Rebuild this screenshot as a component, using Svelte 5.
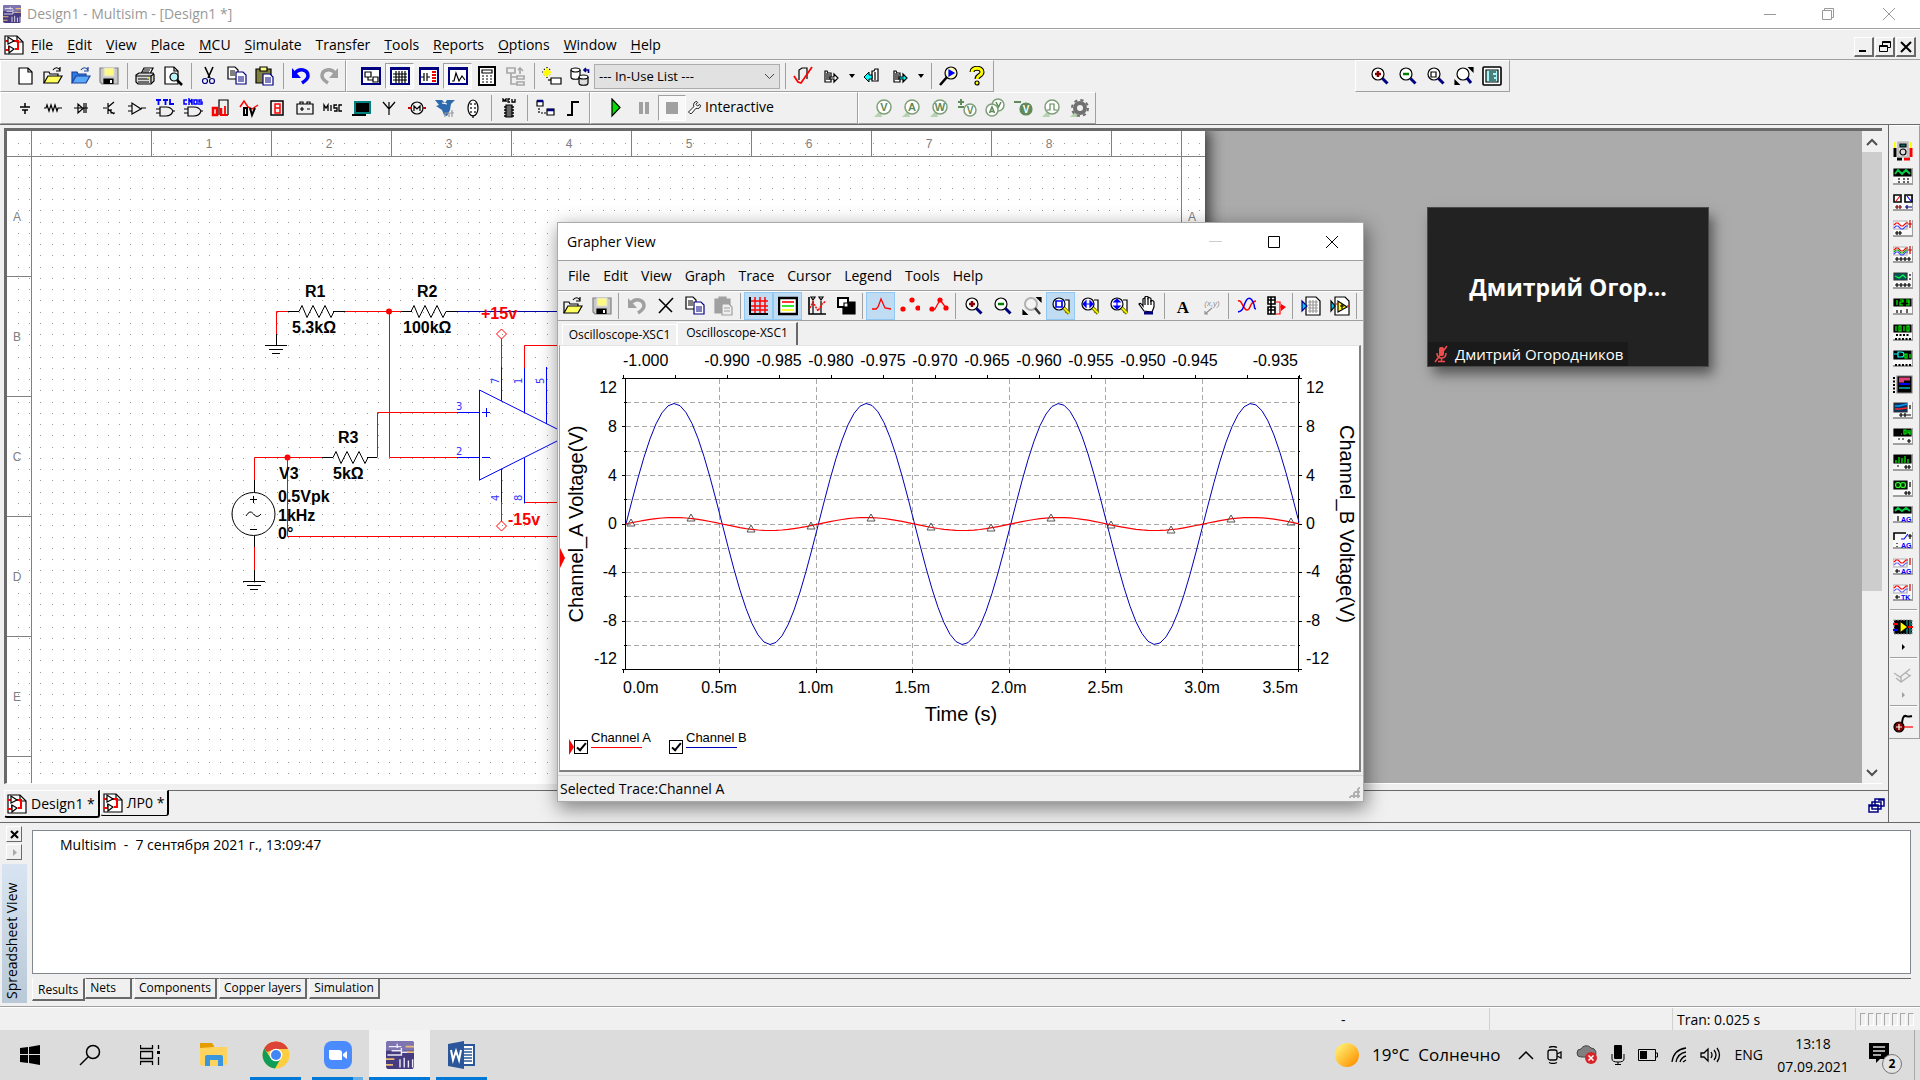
<script lang="ts">
  type Tool = { icon?: string; label?: string; on?: boolean; sep?: boolean; caret?: boolean; disabled?: boolean };

  const sep: Tool = { sep: true };

  // Pieces shared by several icons
  const lens = '<circle cx="8" cy="8" r="6" fill="#fff"/><path d="M12.5 12.5l5 5" stroke="#000080" stroke-width="3"/>';
  const yellowLens = '<path d="M14 4h4v12h-4" fill="#fff"/><circle cx="8" cy="8" r="6" fill="#fff"/><path d="M13 12l5 5.500" stroke="#808000" stroke-width="3.500"/><path d="M13 12l5 5" stroke="#ff0" stroke-width="1.500"/>';
  const folder = '<path d="M1 17V6h5l1 2h8v3"/><path d="M1 17l4-7h14l-4 7z" fill="#ffff60"/><path d="M10 4c2-3 5-3 7 0M17 1v4h-4"/>';
  const floppy = '<path d="M1 2h18v16H3l-2-2z" fill="#c8c8c8" stroke="#808080"/><path d="M5 2h10v8H5z" fill="#fffb80" stroke="#ddd"/><path d="M5 18v-5h9v5" fill="#000"/><path d="M11 14h2v3h-2z" fill="#fff" stroke="none"/>';
  const page = '<path d="M4 2h9l4 4v12H4z" fill="#fff"/><path d="M13 2v4h4"/>';
  const copy = '<path d="M1 1h7l3 3v9H1z" fill="#fff"/><path d="M3 5h5M3 7h5M3 9h5"/><path d="M9 6h7l3 3v9H9z" fill="#fff" stroke="#000080"/><path d="M11 11h6M11 13h6M11 15h6" stroke="#000080"/>';
  const frame = '<path d="M1 2h18v16H1z" fill="#fff" stroke="#000080" stroke-width="2"/><path d="M1 3h18" stroke="#000080" stroke-width="2"/>';
  const gate = '<path d="M5 9h6c4 0 6 2 7 4-1 3-3 5-7 5H5zM1 11h4M1 15h4M18 13h2"/>';
  const chip = '<path d="M4 5h2l1 2h3v9H4z" fill="#fff"/><path d="M6 7v7M8 8v6"/>';
  const meter = '<path d="M0 1h20v17H0z" fill="#f8f8f8" stroke="none"/><path d="M0 17h20V1" stroke="#a0a0a0" stroke-width="2"/>';
  const screen = '<path d="M0 2h14v8H0z" fill="#fff" stroke="#aaa"/>';
  const probe = (t: string) =>
    `<path d="M1 19h8l-2-6z" fill="#b5d3b0" stroke="none"/><circle cx="11" cy="9" r="7" fill="#fff" stroke="#7d9f78" stroke-width="1.500"/><text x="11" y="13" text-anchor="middle" font-size="11" font-weight="700" fill="#5f8a5a" stroke="none">${t}</text>`;
  const wave = (c: string, y: number) => `<path d="M1 ${y}l2-2 2 0 3 3 2 0 3-3 2 0" stroke="${c}"/>`;

  const icons: Record<string, string> = {
    doc: '<path d="M1 1h12l6 6v12H1z" fill="#fff"/><path d="M13 1v6h6"/><path d="M1 6h5M1 15h4v-4M9 6h5v8h-3" stroke="#f00" stroke-width="2"/><path d="M4 2v7l6-3zM5 11v7l5-4z" fill="#fff"/>',
    logo: '<rect x="0" y="0" width="20" height="20" rx="2" fill="#463a80" stroke="none"/><path d="M2 0h16q2 0 2 2v5H0V2q0-2 2-2z" fill="#7d74b0" stroke="none"/><path d="M2 4h9M4 7h7v-2M1 10h10v-2h5M8 2v3M10 13v6M13 12v7M16 14v5M19 13v6" stroke="#eceaf6" stroke-width="1"/><path d="M14 4h6M15 8h5M0 13h6M0 17h5" stroke="#e8bd74" stroke-width="1.200"/>',
    new: page,
    open: folder,
    openBlue: '<path d="M1 17V6h5l1 2h8v3" fill="#2a7de0" stroke="#1a3f9c"/><path d="M1 17l4-7h14l-4 7z" fill="#5aa8f8" stroke="#1a3f9c"/><path d="M10 4c2-3 5-3 7 0M17 1v4h-4" stroke="#1a3f9c"/>',
    save: floppy,
    print: '<path d="M6 8l3-6h9l-3 6" fill="#fff"/><path d="M9 4h6M8 6h6"/><path d="M1 9l3-2h14l1 2v6l-3 3H3l-2-2z" fill="#d8d8d8"/><path d="M1 10h15v7M3 13h11M16 10l3-2M3 16h11" /><path d="M12 12h2" stroke="#ff0"/>',
    preview: '<path d="M2 1h9l4 4v13H2z" fill="#fff"/><path d="M11 1v4h4"/><circle cx="11" cy="11" r="4" fill="#b8f4f8"/><path d="M14 14l5 5" stroke-width="2.500"/>',
    cut: '<path d="M6 1l5 11M14 1L9 12" stroke-width="1.600"/><circle cx="6" cy="15" r="2.500" stroke="#000080"/><circle cx="13" cy="15" r="2.500" stroke="#000080"/>',
    copy,
    paste: '<path d="M1 3h15v14H1z" fill="#808040"/><path d="M5 1h7v4H5z" fill="#ff8"/><path d="M8 8h7l3 3v8H8z" fill="#fff" stroke="#000080"/><path d="M10 12h6M10 14h6M10 16h6" stroke="#000080"/>',
    pasteOff: '<path d="M1 3h15v14H1z" fill="#a0a0a0" stroke="#a0a0a0"/><path d="M5 1h7v4H5z" fill="#a0a0a0" stroke="#a0a0a0"/><path d="M8 8h7l3 3v8H8z" fill="#eee" stroke="#a0a0a0"/><path d="M10 12h6M10 15h6" stroke="#a0a0a0"/>',
    undo: '<path d="M4 7c4-5 13-4 13 3 0 3-3 5-6 7" stroke="#00f" stroke-width="3.500"/><path d="M1 2v10h9z" fill="#00f" stroke="none"/>',
    undoOff: '<path d="M4 7c4-5 13-4 13 3 0 3-3 5-6 7" stroke="#a0a0a0" stroke-width="3.500"/><path d="M1 2v10h9z" fill="#a0a0a0" stroke="none"/>',
    redoOff: '<path d="M16 7c-4-5-13-4-13 3 0 3 3 5 6 7" stroke="#a0a0a0" stroke-width="3.500"/><path d="M19 2v10h-9z" fill="#a0a0a0" stroke="none"/>',
    toolbox: frame + '<path d="M4 6h6v5H4zM12 11h5v5h-5zM7 11v3h5" />',
    sheet: frame + '<path d="M3 8h14M3 11h14M3 14h14M6 5v12M9 5v12M12 5v12M15 5v12"/>',
    spice: frame + '<path d="M2 11h3M5 7v8M8 7v8M8 11h3"/><path d="M13 6h4M13 9h4M13 12h4M13 15h4" stroke="#e00" stroke-width="2"/>',
    grapher: frame + '<path d="M4 15h2l2-8 3 8 3-5 3 4"/>',
    calc: '<path d="M2 1h16v18H2z" fill="#fff" stroke-width="2"/><path d="M5 4h10v3H5zM5 10h2M9 10h2M13 10h2M5 13h2M9 13h2M13 13h2M5 16h2M9 16h2M13 16h2"/>',
    tree: '<path d="M1 2h8v5H1zM11 10h7v3h-7zM11 16h7v3h-7zM5 7v11h6M5 11h6M14 2v6M12 4l2-2 3 3" stroke="#a8a8a8" stroke-width="1.700"/>',
    wizard: '<path d="M5 1v11M0 6h10M2 3l6 6M8 3l-6 6" stroke="#000" stroke-width="1.200" stroke-dasharray="1 1.500"/><path d="M5 2v9M1 6h8M3 4l5 5M7 4l-5 5" stroke="#ff0" stroke-width="1.800"/><path d="M9 12h10v6H9z" fill="#fff"/><path d="M6 14h3"/>',
    database: '<path d="M1 4v7c0 3 9 3 9 0V4" fill="#fff"/><ellipse cx="5.500" cy="4" rx="4.500" ry="2" fill="#fff"/><path d="M9 11v6c0 3 9 3 9 0v-6" fill="#ddd"/><ellipse cx="13.500" cy="11" rx="4.500" ry="2" fill="#fff"/><path d="M18.500 7V4H14M16 2l-2 2 2 2" stroke="#000080" stroke-width="1.600"/>',
    erc: '<path d="M6 14V4l3-2h5v11"/><path d="M1 10l4 6 3 1L19 1" stroke="#f00" stroke-width="1.800"/>',
    toLayout: chip + '<path d="M9 11h4V8l4 4-4 4v-3H9z" fill="#fff"/>',
    back: '<path d="M10 5h2l1-2h3v12h-6zM13 6v8" fill="#fff"/><path d="M10 9H7V6l-5 5 5 5v-3h3z" fill="#0ff" stroke-width="1"/>',
    forward: chip + '<path d="M9 11h4V8l4 4-4 4v-3H9z" fill="#0ff"/>',
    find: '<circle cx="12" cy="7" r="6" fill="#ffffc0"/><path d="M10 4v6l5-3z" fill="#00f" stroke="#00f"/><path d="M8 11l-7 8" stroke-width="2.500"/>',
    help: '<path d="M5 6c0-5 10-5 10 0 0 4-5 3-5 7" stroke="#000" stroke-width="5"/><path d="M5 6c0-5 10-5 10 0 0 4-5 3-5 7" stroke="#ff0" stroke-width="3"/><circle cx="10" cy="17" r="2" fill="#ff0"/>',
    source: '<path d="M10 5v4M5 9h10M7 12h6M10 12v4" stroke-width="1.500"/>',
    basic: '<path d="M1 10h2l1-3 2 6 2-6 2 6 2-6 2 6 1-3h4"/>',
    diode: '<path d="M3 10h14M7 6v9l5-4.500zM13 5v10M15 5v10"/>',
    transistor: '<path d="M4 10h4M9 5v11M9 9l6-5M9 11l6 5M12 11v4h4"/>',
    analog: '<path d="M5 5v11l9-5zM1 8h4M1 13h4M14 10h5"/>',
    ttl: gate + '<path d="M1 2h5M3.500 2v5M8 2h5M10.500 2v5M15 1v5h4" stroke="#00f" stroke-width="1.800"/>',
    cmos: gate + '<path d="M4 2H1v4h3M6 7V1l2 3 1-3v6M11 2h3v4h-3zM19 2h-3v2h3v2h-4" stroke="#00f" stroke-width="1.500"/>',
    miscDigital: '<path d="M8 17V2h9v15" /><path d="M2 10h4v7H2zM10 17V10" stroke="#f00" stroke-width="2.500"/><path d="M9 17h8M14 8v10" stroke="#f00" stroke-width="1.800"/>',
    mixed: '<path d="M1 9l4-6 4 6 4 2 3-2 3-2" stroke="#f00" stroke-width="1.500"/><path d="M5 10h3v7H5zM11 10l2 7 3-7" stroke-width="2"/>',
    indicator: '<path d="M4 3h12v14H4z" stroke-width="1.500"/><path d="M8 6h5v9H8zM8 10h5" stroke="#f00" stroke-width="1.500"/>',
    power: '<path d="M2 6h16v10H2zM5 6V4h3v2M12 6V4h3v2M5 11h4M7 9v4M12 11h3"/>',
    misc: '<path d="M1 13V7l2 3 2-3v6M8 7v6M14 7h-3v3h3v3h-3M19 7h-3v6h3" stroke-width="1.300"/>',
    periph: '<path d="M4 4h15v11H4z" fill="#000" stroke="#008080" stroke-width="2"/><path d="M1 17h14" stroke-width="2"/>',
    rf: '<path d="M10 4v13M4 4l6 7 6-7"/>',
    motor: '<circle cx="10" cy="10" r="6"/><path d="M7 13V8l3 3 3-3v5" /><path d="M1 10h3M16 10h3" stroke="#c00" stroke-width="2"/>',
    ni: '<path d="M0 2h7l3 3 2-3h8l-4 4-1 6-3 6-3-1-2-5-6-4 3-1z" fill="#2c69ad" stroke="none"/><path d="M7 5l5 1" stroke="#fff"/><path d="M10 19v-4h4v4M17 12v7M15 15h4" stroke="#999"/>',
    connector: '<ellipse cx="10" cy="10" rx="5" ry="8" fill="#fff"/><path d="M8 5v2M12 5v2M8 9v2M12 9v2M8 13v2M12 13v2M10 17v3"/>',
    mcu: '<path d="M4 4V1l1.500 2L7 1v3M11 1H9v3h2M13 1v3h3V1" stroke-width="1.300"/><path d="M7 7h6v12H7z" fill="#666"/><path d="M5 9h2M5 12h2M5 15h2M5 18h2M13 9h2M13 12h2M13 15h2M13 18h2" stroke-width="1.500"/>',
    hierarchy: '<path d="M2 3h6v5H2zM12 11h7v6h-7z" fill="#fff"/><path d="M2 3h6M12 12h7" stroke="#000080" stroke-width="2.500"/><path d="M4 10v5M6 15h5" stroke-dasharray="2 1"/>',
    bus: '<path d="M4 17h5V4h7" stroke-width="2"/>',
    run: '<path d="M6 1v17l8-8.500z" fill="#00e000"/>',
    pause: '<path d="M7 4v12M13 4v12" stroke="#a0a0a0" stroke-width="4"/>',
    stop: '<path d="M4 4h12v12H4z" fill="#a0a0a0" stroke="none"/>',
    wrench: '<path d="M4 18l-2-2 7-7c-1-4 1-7 4-7l1 1-2 3 2 2 3-2 1 1c0 4-3 5-6 4l-6 7z" fill="#fff"/>',
    probeV: probe('V'),
    probeA: probe('A'),
    probeW: probe('W'),
    probeDiff: '<path d="M1 4h6M4 1v6M1 9h6" stroke="#5f8a5a" stroke-width="2"/><circle cx="13" cy="12" r="6" fill="#fff" stroke="#7d9f78" stroke-width="1.500"/><text x="13" y="16" text-anchor="middle" font-size="10" font-weight="700" fill="#5f8a5a" stroke="none">V</text>',
    probeVI: '<circle cx="13" cy="7" r="6" fill="#fff" stroke="#7d9f78" stroke-width="1.500"/><path d="M11 4l2.500 5L16 4" stroke="#5f8a5a" stroke-width="1.500"/><circle cx="7" cy="12" r="6" fill="#fff" stroke="#7d9f78" stroke-width="1.500"/><path d="M4.500 15L7 9l2.500 6M5 13.500h4" stroke="#5f8a5a" stroke-width="1.500"/>',
    probeRef: '<path d="M1 4h7" stroke="#5f8a5a" stroke-width="2"/><circle cx="13" cy="11" r="6" fill="#5f8a5a" stroke="#5f8a5a"/><text x="13" y="15" text-anchor="middle" font-size="10" font-weight="700" fill="#fff" stroke="none">V</text>',
    probeDigital: '<path d="M1 19h8l-2-6z" fill="#b5d3b0" stroke="none"/><circle cx="11" cy="9" r="7" fill="#fff" stroke="#7d9f78" stroke-width="1.500"/><path d="M6 12h3V6h4v6h3" stroke="#5f8a5a"/>',
    gear: '<path d="M1 19h8l-2-6z" fill="#b5d3b0" stroke="none"/><circle cx="11" cy="10" r="5" stroke="#707070" stroke-width="4"/><circle cx="11" cy="10" r="8" stroke="#707070" stroke-width="2" stroke-dasharray="3.200 3.100"/>',
    zoomIn: lens + '<path d="M8 5v6M5 8h6" stroke="#800000" stroke-width="2.500"/>',
    zoomOut: lens + '<path d="M5 8h6" stroke="#008000" stroke-width="2.500"/>',
    zoomArea: lens + '<path d="M5 6h5v5H5z"/>',
    zoomFit: '<path d="M15 1.500h4v4zM5 18.500H1v-4z" fill="#000"/><circle cx="9" cy="8" r="6" fill="#fff"/><path d="M13 12l4 5" stroke="#000080" stroke-width="3"/>',
    zoomGray: '<path d="M15 1.500h4v4zM5 18.500H1v-4z" fill="#000"/><circle cx="9" cy="8" r="6" fill="#f4f4f4" stroke="#b0b0b0" stroke-width="2"/><path d="M13 12l5 6" stroke="#333" stroke-width="2.500"/>',
    fullscreen: '<rect x="1" y="1" width="18" height="18" rx="1" stroke-width="1.600" fill="#fff"/><path d="M4 4h12v12H4z" fill="#a0f8f8"/><path d="M7 6h7M7 8h4M7 10h7M7 12h5M7 14h7"/>',
    lensBox: yellowLens + '<path d="M5 5h6v6H5z" stroke="#00f" stroke-width="1.700"/>',
    lensH: yellowLens + '<path d="M4 8h8M6 5L3 8l3 3zM10 5l3 3-3 3z" stroke="#00f" fill="#00f"/>',
    lensV: yellowLens + '<path d="M8 4v8M5 6l3-3 3 3zM5 10l3 3 3-3z" stroke="#00f" fill="#00f"/>',
    hand: '<path d="M6 15L1 8c1-1 2-1 4 2V3c1-1 2-1 2 0V1c1-1 3-1 3 0v1c1-1 3 0 3 1v2c1-1 3 0 3 1v5l-2 5z" fill="#fff"/><path d="M7 3v6M10 2v7M13 4v5"/><path d="M6 17h9" stroke="#000080" stroke-width="3"/>',
    del: '<path d="M3 3l13 13M17 2L3 17" stroke-width="1.600"/>',
    grid: '<path d="M6 1v17M11 1v17M16 1v17M1 5h18M1 10h18M1 14h18" stroke="#f00" stroke-width="1.500"/><path d="M1 1v17h18" stroke-width="2"/>',
    legend: '<path d="M1 2h18v16H1z" fill="#fff" stroke-width="2.500"/><path d="M4 6h12" stroke="#f00" stroke-width="1.600"/><path d="M4 10h12" stroke="#0d0" stroke-width="1.600"/><path d="M4 14h12" stroke="#ff0" stroke-width="1.600"/>',
    cursors: '<path d="M2 1v17h17" stroke-width="1.600"/><path d="M6 3v15M14 3v15M4 1h4l-2 3zM12 1h4l-2 3z"/><path d="M3 12l3-6 5 9 4-7 4-3" stroke="#f00" stroke-width="1.500" stroke-dasharray="2 1"/>',
    invert: '<path d="M7 6h12v12H7z" fill="#000"/><path d="M2 2h10v9H2z" fill="#fff" stroke-width="2"/><path d="M8 7h4v4H8z" fill="#fff"/>',
    line: '<path d="M1 13h4l2-2 3-8 4 9 6 1" stroke="#f00" stroke-width="1.300"/>',
    dots: '<g fill="#f00" stroke="none"><circle cx="3" cy="13" r="2.600"/><circle cx="12" cy="4" r="2.600"/><circle cx="18" cy="12" r="2.600"/></g>',
    lineDots: '<path d="M2 14l4-1 5-9 7 9" stroke="#f00" stroke-width="1.300"/><g fill="#f00" stroke="none"><circle cx="3" cy="13" r="2.600"/><circle cx="11" cy="4" r="2.600"/><circle cx="17" cy="12" r="2.600"/></g>',
    text: '<text x="10" y="17" text-anchor="middle" font-size="17" font-weight="700" fill="#000" stroke="none" style="font-family:Liberation Serif,serif">A</text>',
    fx: '<text x="10" y="10" text-anchor="middle" font-size="8" font-style="italic" fill="#909090" stroke="none">(x,y)</text><path d="M10 12l-7 6M3 15v3h3" stroke="#909090"/>',
    overlay: '<path d="M1 5c4-2 5 9 9 9s2-8 9-9" stroke="#f00" stroke-width="1.500"/><path d="M1 16c5-1 5-4 7-9s5-7 8-1 0 6 3 7" stroke="#00f" stroke-width="1.500"/>',
    trace: '<path d="M2 1h7v7H2zM2 11h7v7H2zM2 4h7M2 14h7M5 1v17" fill="#fff" stroke-width="1.600"/><path d="M9 6h5v12H9M14 11h3" stroke="#f00"/><path d="M15 8v7l5-4z" fill="#f00" stroke="none"/>',
    excel: '<path d="M5 1h10l4 4v14H5z" fill="#fff"/><path d="M7 6h10M7 9h10M7 12h10M7 15h10M9 4v13M12 4v13M15 4v13" stroke="#999"/><path d="M1 5v10l5-5z" fill="#00c8f0" stroke="#008"/>',
    labview: '<path d="M5 1h10l4 4v14H5z" fill="#fff"/><path d="M8 5v11l9-5z" fill="#ff0"/><path d="M10 10h4M12 8v5"/><path d="M1 5v10l4-5z" fill="#00c8f0"/><path d="M5 8h3M17 10h3" stroke="#f00"/>',
    multimeter: '<path d="M2 1v15M18 1v15" stroke="#ff0" stroke-width="2"/><path d="M2 7v9M4 18h5" stroke-width="3"/><path d="M18 7v9M11 18h6" stroke="#f00" stroke-width="3"/><path d="M5 1h10v15H5z" fill="#ddd" stroke="#aaa"/><path d="M7 3h6v3H7z" fill="#066"/><circle cx="10" cy="11" r="3"/>',
    funcgen: meter + '<path d="M1 2h17v7H1z" fill="#000"/><path d="M2 7l3-4 4 4 4-4 4 4" stroke="#0c4" stroke-width="2"/><path d="M6 11v5M11 11v5M15 11v5" stroke-dasharray="2 1"/>',
    wattmeter: meter + '<path d="M1 2h7v7H1zM12 2h7v7h-7z" fill="#fff" stroke-width="1.600"/><path d="M3 8l4-5" stroke="#f00"/><path d="M18 8l-4-5" stroke="#00f"/><path d="M2 14h7M4 12v4M7 12v4" stroke="#700"/><path d="M12 14h7M14 12v4" stroke="#007"/>',
    scope: meter + screen + wave('#f00', 6) + wave('#44f', 9) + '<path d="M17 1v8M15 5h4" stroke="#c00"/><path d="M2 14h7M4 12v4M7 12v4"/>',
    scope4: meter + screen + wave('#f00', 5) + wave('#0a0', 7) + wave('#44f', 9) + '<path d="M17 1v8M15 5h4" stroke="#c00"/><path d="M2 14h16M4 12v4M8 12v4M12 12v4M16 12v4"/>',
    bode: meter + '<path d="M1 2h13v7H1z" fill="#055" stroke="#333"/><path d="M2 5l4 2 4-3 3 3" stroke="#0f4"/><path d="M2 14h16M4 12v4M8 12v4M12 12v4M16 12v4M17 3v2M17 7v2"/>',
    counter: meter + '<path d="M1 2h17v7H1z" fill="#000"/><path d="M4 3v5M7 3h3v2H7v3h3M13 3h3v5h-3M13 5h3" stroke="#0f0"/><path d="M4 13v3M8 13v3M14 12v4"/>',
    wordgen: meter + '<path d="M1 2h17v7H1z" fill="#000"/><path d="M3 3v5M6 3h2v5H6zM11 3v5M14 3h2v5h-2z" stroke="#0f0"/><path d="M3 12h13M2 16h16" stroke-width="2" stroke-dasharray="2 1.500"/>',
    logicconv: meter + '<path d="M1 2h17v8H1z" fill="#000"/><path d="M1 5h4V3h3c4 0 4 5 0 5H5V5" stroke="#0ff"/><path d="M12 5h2v4h-2zM17 5v4" stroke="#0f0"/><path d="M2 16h16" stroke-width="2" stroke-dasharray="2 1.500"/>',
    logican: '<path d="M4 1h15v17H4z" fill="#000" stroke="#888"/><path d="M6 4h11M6 6h5" stroke="#e0407a" stroke-width="3"/><path d="M6 9h11" stroke="#00f" stroke-width="2"/><path d="M6 13h11" stroke="#088" stroke-width="2"/><path d="M1 2v16" stroke-width="2" stroke-dasharray="2 1.500"/>',
    iv: meter + '<path d="M1 2h13v9H1z" fill="#036" stroke="#333"/><path d="M2 5h4l8-2" stroke="#09f" stroke-width="1.500"/><path d="M2 8h5l7-1" stroke="#f22" stroke-width="1.500"/><path d="M6 14h12M8 12v4M12 12v4M17 4v4"/>',
    distortion: meter + '<path d="M1 2h17v7H1z" fill="#000"/><path d="M8 7h1M11 3h2v4h-2zM15 3v3h2M17 3v5" stroke="#0f0"/><path d="M5 12h2M9 12h2M16 12v4M14 14h4"/>',
    spectrum: meter + '<path d="M1 2h17v8H1z" fill="#000"/><path d="M3 7v3M6 4v6M9 5v5M12 3v7M15 6v4" stroke="#0f0"/><path d="M4 13h2M11 14h7M13 12v4M16 12v4"/>',
    network: meter + '<path d="M1 2h13v8H1z" fill="#030"/><circle cx="5" cy="6" r="2.500" stroke="#3f3"/><circle cx="10" cy="6" r="2.500" stroke="#3f3"/><path d="M17 3v5M11 14h7M13 12v4M16 12v4"/>',
    agFunc: meter + '<path d="M1 2h17v6H1z" fill="#000"/><path d="M2 6l3-3 4 3 4-3 4 3" stroke="#0c4" stroke-width="2"/><path d="M5 11v5"/><text x="8" y="17" font-size="7" font-weight="700" fill="#00f" stroke="none">AG</text>',
    agMeter: meter + '<path d="M1 9V2h12" stroke-width="1.600"/><path d="M8 8h3l4-5" stroke="#00f"/><path d="M17 3v5M15 5h4"/><path d="M4 12v1M4 15v1"/><text x="8" y="17" font-size="7" font-weight="700" fill="#00f" stroke="none">AG</text>',
    agScope: meter + screen + wave('#f00', 5) + wave('#66f', 8) + '<path d="M17 1v7" stroke="#c00"/><path d="M2 14h5M4 12v4"/><text x="8" y="17" font-size="7" font-weight="700" fill="#00f" stroke="none">AG</text>',
    tkScope: meter + screen + wave('#f00', 5) + wave('#66f', 8) + '<path d="M17 1v7" stroke="#c00"/><path d="M2 14h5M4 12v4"/><text x="8" y="17" font-size="7" font-weight="700" fill="#00f" stroke="none">TK</text>',
    lvInstr: '<path d="M1 3h18v14H1z" fill="#000" stroke="#999" stroke-dasharray="2 1"/><path d="M14 4v12M17 4v12" stroke="#066" stroke-width="2"/><path d="M7 4v12l8-6z" fill="#ff0"/><path d="M15 10h5M0 7h5" stroke="#f00" stroke-width="2"/><path d="M0 13h5" stroke="#00f" stroke-width="2"/>',
    elvis: '<path d="M1 8l6 4 10-8M3 13l5 4 10-7M8 12v5M13 8l4 3" stroke="#b4b4b4" stroke-width="1.500"/>',
    clamp: '<path d="M9 12c0-5 1-10 4-9s2 1 6 0" stroke-width="2"/><circle cx="6" cy="14" r="5" fill="#800000"/><path d="M6 11v6M3 14h6" stroke="#fff"/><path d="M11 14h9" stroke="#f00"/>'
  };

  const menus = [['', 'F', 'ile'], ['', 'E', 'dit'], ['', 'V', 'iew'], ['', 'P', 'lace'], ['', 'M', 'CU'], ['', 'S', 'imulate'], ['Tra', 'n', 'sfer'], ['', 'T', 'ools'], ['', 'R', 'eports'], ['', 'O', 'ptions'], ['', 'W', 'indow'], ['', 'H', 'elp']];

  const standardBar: Tool[] = [
    { icon: 'new', label: 'New' }, { icon: 'open', label: 'Open' }, { icon: 'openBlue', label: 'Open samples' }, { icon: 'save', label: 'Save' }, sep,
    { icon: 'print', label: 'Print' }, { icon: 'preview', label: 'Print preview' }, sep,
    { icon: 'cut', label: 'Cut' }, { icon: 'copy', label: 'Copy' }, { icon: 'paste', label: 'Paste' }, sep,
    { icon: 'undo', label: 'Undo' }, { icon: 'redoOff', label: 'Redo', disabled: true }
  ];
  const viewBar: Tool[] = [
    { icon: 'toolbox', label: 'Design toolbox' }, { icon: 'sheet', label: 'Spreadsheet view', on: true }, { icon: 'spice', label: 'SPICE netlist viewer' },
    { icon: 'grapher', label: 'Grapher', on: true }, { icon: 'calc', label: 'Postprocessor' }, { icon: 'tree', label: 'Parent sheet', disabled: true }
  ];
  const partBar: Tool[] = [{ icon: 'wizard', label: 'Component wizard' }, { icon: 'database', label: 'Database manager' }];
  const layoutBar: Tool[] = [
    { icon: 'erc', label: 'Electrical rules check' }, { icon: 'toLayout', label: 'Transfer to layout', caret: true },
    { icon: 'back', label: 'Back annotate' }, { icon: 'forward', label: 'Forward annotate', caret: true }, sep,
    { icon: 'find', label: 'Find examples' }, { icon: 'help', label: 'Help' }
  ];
  const zoomBar: Tool[] = [
    { icon: 'zoomIn', label: 'Zoom in' }, { icon: 'zoomOut', label: 'Zoom out' }, { icon: 'zoomArea', label: 'Zoom area' },
    { icon: 'zoomFit', label: 'Zoom sheet' }, { icon: 'fullscreen', label: 'Full screen' }
  ];
  const componentBar: Tool[] = [
    ...['source', 'basic', 'diode', 'transistor', 'analog', 'ttl', 'cmos', 'miscDigital', 'mixed', 'indicator', 'power', 'misc', 'periph', 'rf', 'motor', 'ni', 'connector'].map((n) => ({ icon: n, label: `Place ${n}` })),
    sep, { icon: 'mcu', label: 'Place MCU' }, sep,
    { icon: 'hierarchy', label: 'Hierarchical block' }, { icon: 'bus', label: 'Bus' }
  ];
  const probeBar: Tool[] = ['probeV', 'probeA', 'probeW', 'probeDiff', 'probeVI', 'probeRef', 'probeDigital', 'gear'].map((n) => ({ icon: n, label: n }));
  const grapherBar: Tool[] = [
    { icon: 'open', label: 'Open' }, { icon: 'save', label: 'Save' }, sep,
    { icon: 'undoOff', label: 'Undo', disabled: true }, { icon: 'del', label: 'Delete' }, { icon: 'copy', label: 'Copy' }, { icon: 'pasteOff', label: 'Paste', disabled: true }, sep,
    { icon: 'grid', label: 'Show grid', on: true }, { icon: 'legend', label: 'Show legend', on: true }, { icon: 'cursors', label: 'Show cursors' }, { icon: 'invert', label: 'Black and white' }, sep,
    { icon: 'line', label: 'Lines', on: true }, { icon: 'dots', label: 'Points' }, { icon: 'lineDots', label: 'Lines and points' }, sep,
    { icon: 'zoomIn', label: 'Zoom in' }, { icon: 'zoomOut', label: 'Zoom out' }, { icon: 'zoomGray', label: 'Zoom fit' }, { icon: 'lensBox', label: 'Zoom area', on: true },
    { icon: 'lensH', label: 'Zoom horizontal' }, { icon: 'lensV', label: 'Zoom vertical' }, { icon: 'hand', label: 'Pan' }, sep,
    { icon: 'text', label: 'Add text' }, { icon: 'fx', label: 'Add data label', disabled: true }, sep,
    { icon: 'overlay', label: 'Overlay traces' }, { icon: 'trace', label: 'Add traces' }, sep,
    { icon: 'excel', label: 'Export to Excel' }, { icon: 'labview', label: 'Export to LabVIEW' }, sep
  ];
  const instruments = ['multimeter', 'funcgen', 'wattmeter', 'scope', 'scope4', 'bode', 'counter', 'wordgen', 'logicconv', 'logican', 'iv', 'distortion', 'spectrum', 'network', 'agFunc', 'agMeter', 'agScope', 'tkScope'];
  const resultTabs = ['Results', 'Nets', 'Components', 'Copper layers', 'Simulation'];

  // Snap grid of the schematic sheet
  let gridDots = '';
  for (let i = 0; i < 106; i++) {
    for (let j = 0; j < 70; j++) {
      gridDots += `M${Math.round(17.75 + i * 11.25)} ${Math.round(142.75 + j * 11.25)}h1v1h-1z`;
    }
  }
  const columns = [0, 1, 2, 3, 4, 5, 6, 7, 8];
  const rows = ['A', 'B', 'C', 'D', 'E'];
  const zig = (x: number, y: number) => `M${x} ${y}l3-6 5 12 6-12 6 12 6-12 6 12 3-6`;

  // Oscilloscope plot
  const plot = { left: 625, right: 1299, zero: 524, period: 192.4 };
  const sine = (x: number, amp: number) => plot.zero - amp * Math.sin((2 * Math.PI * (x - plot.left - 1)) / plot.period);
  function curve(amp: number) {
    const pts: string[] = [];
    for (let x = plot.left + 1; x <= plot.right; x += 6) pts.push(`${x},${sine(x, amp).toFixed(1)}`);
    pts.push(`${plot.right},${sine(plot.right, amp).toFixed(1)}`);
    return pts.join(' ');
  }
  const volts = [12, 8, 4, 0, -4, -8, -12];
  const voltY = (v: number) => (v === 12 ? 393 : v === -12 ? 664 : 529 - v * 12.1);
  const hLines = Array.from({ length: 11 }, (_, i) => Math.round(402 + i * 24.3) + 0.5);
  const vLines = Array.from({ length: 6 }, (_, i) => Math.round(719 + i * 96.6) + 0.5);
  const topTicks = Array.from({ length: 14 }, (_, i) => 623.5 + i * 52);
  const topLabels = ['-0.990', '-0.985', '-0.980', '-0.975', '-0.970', '-0.965', '-0.960', '-0.955', '-0.950', '-0.945'];
  const timeLabels = ['0.5m', '1.0m', '1.5m', '2.0m', '2.5m', '3.0m'];
  const markers = Array.from({ length: 12 }, (_, i) => 631 + i * 60);

  let channelA = $state(true);
  let channelB = $state(true);
</script>

{#snippet icon(name: string, size = 20)}
  <svg class="icon" width={size} height={size} viewBox="0 0 20 20" fill="none" stroke="#000" stroke-width="1.2" aria-hidden="true">{@html icons[name]}</svg>
{/snippet}

{#snippet tools(list: Tool[])}
  {#each list as t}
    {#if t.sep}
      <span class="sep"></span>
    {:else}
      <button class="tool" class:on={t.on} disabled={t.disabled} aria-label={t.label}>{@render icon(t.icon ?? '')}</button>
      {#if t.caret}<button class="caret" aria-label="{t.label} options"></button>{/if}
    {/if}
  {/each}
{/snippet}

<div class="app">
  <header class="titlebar">
    {@render icon('logo', 18)}
    <h1>Design1 - Multisim - [Design1 *]</h1>
    <div class="winbtns">
      <button aria-label="Minimize"><svg width="12" height="12" stroke="#999" fill="none"><path d="M0 6.500h12" /></svg></button>
      <button aria-label="Restore"><svg width="14" height="14" stroke="#999" fill="none"><path d="M1.500 3.500h9v9h-9zM3.500 3.500v-2h9v9h-2" /></svg></button>
      <button aria-label="Close"><svg width="14" height="14" stroke="#999" fill="none"><path d="M1 1l12 12M13 1L1 13" /></svg></button>
    </div>
  </header>

  <nav class="menubar">
    {@render icon('doc', 20)}
    {#each menus as [pre, key, post]}
      <button>{pre}<u>{key}</u>{post}</button>
    {/each}
    <div class="mdibtns">
      <button aria-label="Minimize document"><svg width="16" height="16"><path d="M3 12h7" stroke="#000" stroke-width="2" /></svg></button>
      <button aria-label="Restore document"><svg width="16" height="16" fill="none" stroke="#000"><path d="M5.500 6V2.500h8v6H11M5 3.500h9M2.500 6.500h8v6h-8zM2 7.500h9" /></svg></button>
      <button aria-label="Close document"><svg width="16" height="16"><path d="M3 3l10 10M13 3L3 13" stroke="#000" stroke-width="2" /></svg></button>
    </div>
  </nav>

  <div class="toolrow">
    <div class="bar standard">{@render tools(standardBar)}</div>
    <div class="bar views">
      <div class="wide">{@render tools(viewBar)}</div>
      <span class="sep"></span>
      {@render tools(partBar)}
      <div class="combo">
        <select aria-label="In-use list"><option>--- In-Use List ---</option></select>
        <svg width="11" height="7" fill="none" stroke="#444"><path d="M1 1l4.500 4.500L10 1" /></svg>
      </div>
      <span class="sep"></span>
      {@render tools(layoutBar)}
    </div>
    <div class="bar zoom">{@render tools(zoomBar)}</div>
  </div>

  <div class="toolrow">
    <div class="bar components">{@render tools(componentBar)}</div>
    <div class="bar simulation">
      <button class="tool" aria-label="Run">{@render icon('run')}</button>
      <button class="tool" aria-label="Pause">{@render icon('pause')}</button>
      <button class="tool on" aria-label="Stop">{@render icon('stop')}</button>
      <button class="interactive">{@render icon('wrench', 15)}Interactive</button>
    </div>
    <div class="bar probes">{@render tools(probeBar)}</div>
  </div>

  <div class="middle">
    <div class="documents">
      <main class="workspace">
        <div class="sheet">
          <svg width="1198" height="900" viewBox="7 131 1198 900" fill="none" stroke-width="1">
            <path d={gridDots} fill="#999" shape-rendering="crispEdges" />
            <g stroke="#808080">
              <path d="M7 156.500H1205M31.500 131V1000M1181.500 131V1000" />
              {#each columns as c}<path d="M{151.5 + c * 120} 131v25" />{/each}
              {#each rows as _, r}<path d="M7 {276.5 + r * 120}h24M1181 {276.5 + r * 120}h24" />{/each}
            </g>
            <g class="ruler" fill="#808080">
              {#each columns as c}<text x={89 + c * 120} y="148">{c}</text>{/each}
              {#each rows as r, i}<text x="17" y={221 + i * 120}>{r}</text>{/each}
              <text x="1192" y="221">{rows[0]}</text>
            </g>
            <g stroke="#f00">
              <path d="M276.500 334v-22.500H288M345 311.500h56M389.500 311.500v146H457M457 412.500h-79.500v45M322 457.500h-67.500V480M287.500 457.500v79H560M501.500 339v28M560 345.500h-35.500V368M501.500 502v19M524.500 502.500H560M254.500 547v23" />
              <path d="M501.500 329l5 5-5 5-5-5zM501.500 521l5 5-5 5-5-5z" />
            </g>
            <g fill="#f00"><circle cx="389" cy="311.500" r="3" /><circle cx="287.500" cy="457.500" r="3" /></g>
            <path d="M457 311.500h103" stroke="#00a" />
            <g stroke="#00f">
              <path d="M457 412.500h22M457 457.500h22M479.500 390v90L569 435zM501.500 367v34M524.500 368v45M546.500 367v57M501.500 469v33M524.500 458v45" />
              <path d="M482 412.500h8M486.500 408v9M482 457.500h8" />
            </g>
            <g stroke="#000">
              <path d="M288 311.500h11M333 311.500h12M401 311.500h11M446 311.500h11M322 457.500h11M367 457.500h10M276.500 334v11.500M254.500 480v12M254.500 536v11M254.500 570v11" />
              <path d={zig(299, 311.5)} /><path d={zig(411, 311.5)} /><path d={zig(333, 457.5)} />
              <path d="M265 345.500h22M269 349.500h14M272 353.500h8M243 581.500h22M247 585.500h14M250 589.500h8" />
              <circle cx="253.500" cy="514" r="21.500" />
              <path d="M250 499.500h7M253.500 496v7M250 529.500h7M246 516q4-7 7.500-2t7.500 0" />
            </g>
            <g class="part" fill="#000">
              <text x="305" y="297">R1</text><text x="417" y="297">R2</text><text x="338" y="443">R3</text>
              <text x="292" y="333">5.3kΩ</text><text x="403" y="333">100kΩ</text><text x="333" y="479">5kΩ</text>
              <text x="279" y="479">V3</text><text x="278" y="502">0.5Vpk</text><text x="278" y="521">1kHz</text><text x="278" y="539">0°</text>
            </g>
            <g class="part" fill="#f00"><text x="481" y="319">+15v</text><text x="508" y="525">-15v</text></g>
            <g class="pin" fill="#33f">
              <text x="456" y="410">3</text><text x="456" y="455">2</text>
              <text transform="translate(499 384) rotate(-90)">7</text>
              <text transform="translate(522 384) rotate(-90)">1</text>
              <text transform="translate(544 384) rotate(-90)">5</text>
              <text transform="translate(499 501) rotate(-90)">4</text>
              <text transform="translate(522 501) rotate(-90)">8</text>
            </g>
          </svg>
        </div>
        <div class="scrollbar">
          <button aria-label="Scroll up"><svg width="12" height="8"><path d="M1 7l5-5 5 5" /></svg></button>
          <div class="track"><div class="thumb"></div></div>
          <button aria-label="Scroll down"><svg width="12" height="8"><path d="M1 1l5 5 5-5" /></svg></button>
        </div>
      </main>

      <div class="doctabs">
        <button class="doctab current">{@render icon('doc', 20)}Design1 *</button>
        <button class="doctab">{@render icon('doc', 20)}ЛР0 *</button>
        <button class="cascade" aria-label="Windows">
          <svg width="18" height="17" fill="#fff" stroke="#000080" stroke-width="1.5"><path d="M7 2h9v7H7zM4 5h9v7H4zM1 8h9v7H1zM1 9h9M10 3h6" /></svg>
        </button>
      </div>
    </div>

    <aside class="instruments">
      {#each instruments as name}
        <button aria-label={name}>{@render icon(name)}</button>
      {/each}
      <hr />
      <button aria-label="LabVIEW instruments">{@render icon('lvInstr')}</button>
      <button class="more" aria-label="More LabVIEW instruments"></button>
      <hr />
      <button aria-label="NI ELVISmx instruments" disabled>{@render icon('elvis')}</button>
      <button class="more off" aria-label="More ELVISmx instruments" disabled></button>
      <hr />
      <button aria-label="Current clamp">{@render icon('clamp')}</button>
    </aside>
  </div>

  <section class="spreadsheet">
    <div class="grip">
      <button class="small" aria-label="Close panel"><svg width="9" height="9"><path d="M1 1l7 7M8 1L1 8" stroke="#000" stroke-width="2" /></svg></button>
      <button class="small" aria-label="Expand panel"><svg width="9" height="9"><path d="M3 1v7l4-3.500z" fill="#aaa" /></svg></button>
      <div class="strip"><span>Spreadsheet View</span></div>
    </div>
    <div class="results">
      <div class="log">Multisim&nbsp; -&nbsp; 7 сентября 2021 г., 13:09:47</div>
      <div class="restabs">
        {#each resultTabs as t, i}
          <button class:current={i === 0}>{t}</button>
        {/each}
      </div>
    </div>
  </section>

  <footer class="status">
    <span class="cell dash">-</span>
    <span class="cell blank"></span>
    <span class="cell tran">Tran: 0.025 s</span>
    <span class="cell progress">{#each { length: 7 } as _}<i></i>{/each}</span>
  </footer>

  <div class="taskbar">
    <button class="task sys" aria-label="Start"><svg width="20" height="20" fill="#000"><path d="M0 3l8-1v7H0zM9 2l11-2v9H9zM0 10h8v8l-8-1zM9 10h11v10L9 18z" /></svg></button>
    <button class="task sys" aria-label="Search"><svg width="22" height="22" fill="none" stroke="#000" stroke-width="1.500"><circle cx="14" cy="8" r="6.500" /><path d="M9 13l-8 8" /></svg></button>
    <button class="task sys" aria-label="Task view"><svg width="20" height="20" fill="none" stroke="#000" stroke-width="1.300"><path d="M.5 0v3.500h12V0M.5 6.500h12v7H.5zM.5 20v-3.500h12V20M18.500 0v4M18.500 12v8" /><path d="M17 6h3v3h-3z" fill="#000" stroke="none" /></svg></button>
    <button class="task" aria-label="Explorer"><svg width="28" height="24"><path d="M0 0h12l2 3v3H0z" fill="#e39d00" /><path d="M0 5l14-1h13v17l-5 2H5l-5-1z" fill="#ffd45e" /><path d="M5 23V14q0-2 2-2h14q2 0 2 2v9h-5v-6h-8v6z" fill="#3a96dd" /></svg></button>
    <button class="task open" aria-label="Chrome">
      <svg width="28" height="28" viewBox="0 0 28 28"><circle cx="14" cy="14" r="13.500" fill="#ffcd40" /><path d="M2.300 7.300A13.500 13.500 0 0 1 25.700 7.300L25.500 8H14z" fill="#db4437" /><path d="M2.300 7.300A13.500 13.500 0 0 0 13 27.500L19 17H8.500z" fill="#0f9d58" /><path d="M25.700 7.700H14L5 11 2.300 7.300A13.500 13.500 0 0 1 25.700 7.700z" fill="#db4437" /><circle cx="14" cy="14" r="6.300" fill="#fff" /><circle cx="14" cy="14" r="5" fill="#4285f4" /></svg>
    </button>
    <button class="task open stacked" aria-label="Zoom"><svg width="28" height="28"><rect width="28" height="28" rx="8" fill="#4a8cff" /><path d="M5 9h10q3 0 3 3v7H8q-3 0-3-3zM19 13l4-3v8l-4-3z" fill="#fff" /></svg></button>
    <button class="task open active" aria-label="Multisim">{@render icon('logo', 28)}</button>
    <button class="task open" aria-label="Word"><svg width="28" height="28"><path d="M14 4h12v20H14z" fill="#fff" stroke="#2b579a" stroke-width="2" /><path d="M16 8h8M16 11h8M16 14h8M16 17h8M16 20h8" stroke="#2b579a" stroke-width="1.500" /><path d="M0 3l16-3v28L0 25z" fill="#2b579a" /><path d="M3 9l2 10 3-9 3 9 2-10" fill="none" stroke="#fff" stroke-width="2" /></svg></button>

    <div class="tray">
      <svg class="sun" width="24" height="24"><defs><linearGradient id="sun" x1="0" y1="0" x2="1" y2="1"><stop offset="0.200" stop-color="#ffe566" /><stop offset="0.900" stop-color="#ff9200" /></linearGradient></defs><circle cx="12" cy="12" r="12" fill="url(#sun)" /></svg>
      <span class="weather">19°C&nbsp; Солнечно</span>
      <svg width="16" height="10" fill="none" stroke="#000" stroke-width="1.500"><path d="M1 9l7-7 7 7" /></svg>
      <svg width="16" height="18" fill="none" stroke="#000" stroke-width="1.300"><rect x="1" y="4" width="9" height="10" rx="2" /><path d="M10 8l4-2v6l-4-2M2 1.500q4-2 8 0M2 16.500q4 2 8 0" /></svg>
      <svg width="22" height="20"><path d="M5 12a4 4 0 0 1 0-8 6 6 0 0 1 10-1 5 5 0 0 1 3 9z" fill="#808080" stroke="#444" /><circle cx="15" cy="13" r="6" fill="#d8232a" /><path d="M12.500 10.500l5 5M17.500 10.500l-5 5" stroke="#fff" stroke-width="1.500" /></svg>
      <svg width="14" height="20"><rect x="3" y="0" width="8" height="14" rx="1" fill="#000" /><path d="M1 9v5q0 3 6 3t6-3V9M7 17v2M4 19.500h6" fill="none" stroke="#000" /></svg>
      <svg width="20" height="12"><path d="M.5.500h17v11H.5zM18 4h1.500v4H18" fill="none" stroke="#000" /><path d="M2 2h7v8H2z" /></svg>
      <svg width="16" height="16" fill="none" stroke="#000" stroke-width="1.300"><path d="M1 15C2 7 7 2 15 1M5 15c1-5 4-9 10-10M9 15c1-3 2-5 6-6M12 15l3-2" /></svg>
      <svg width="22" height="16" fill="none" stroke="#000" stroke-width="1.300"><path d="M1 6h3l4-4v12l-4-4H1zM11 5q2 3 0 6M14 3q4 5 0 10M17 1q5 7 0 14" /></svg>
      <span>ENG</span>
      <time>13:18<br />07.09.2021</time>
      <button class="notify" aria-label="Notifications"><svg width="20" height="20"><path d="M0 0h20v16h-9l-4 4v-4H0z" /><path d="M4 4h12M4 8h12M4 12h8" stroke="#ddd" stroke-width="1.500" /></svg><b>2</b></button>
    </div>
  </div>

  <div class="call">
    <strong>Дмитрий Огор...</strong>
    <span class="who">
      <svg width="16" height="18"><rect x="6" y="2" width="5" height="9" rx="2" fill="#f14c4c" /><path d="M4 8q0 5 4.500 5T13 8M8.500 13v3M5 16.500h7M2 17L14 1" fill="none" stroke="#f14c4c" stroke-width="1.500" /></svg>
      Дмитрий Огородников
    </span>
  </div>

  <section class="grapher">
    <header>
      <h2>Grapher View</h2>
      <button aria-label="Minimize" disabled><svg width="14" height="14" stroke="#ccc"><path d="M0 6.500h13" /></svg></button>
      <button aria-label="Maximize"><svg width="14" height="14" fill="none" stroke="#000"><path d="M1.500 1.500h11v11h-11z" /></svg></button>
      <button aria-label="Close"><svg width="14" height="14" stroke="#000"><path d="M1 1l12 12M13 1L1 13" /></svg></button>
    </header>
    <nav>
      {#each ['File', 'Edit', 'View', 'Graph', 'Trace', 'Cursor', 'Legend', 'Tools', 'Help'] as m}<button>{m}</button>{/each}
    </nav>
    <div class="gtools">{@render tools(grapherBar)}</div>
    <div class="gtabs">
      <button>Oscilloscope-XSC1</button>
      <button class="current">Oscilloscope-XSC1</button>
    </div>
    <div class="chartbox">
      <svg class="pointer" width="5" height="20"><path d="M0 0l5 10-5 10z" fill="#f00" /></svg>
      <svg class="chart" viewBox="563 346 796 384" fill="none" stroke-width="1">
        <g stroke="#a8a8a8" stroke-dasharray="5 3">
          {#each hLines as y}<path d="M626 {y}H1298" />{/each}
          {#each vLines as x}<path d="M{x} 379V669" />{/each}
        </g>
        <g stroke="#000">
          <path d="M622 378.500H1302M622 669.500H1302M625.500 378V670M1298.500 376V672" />
          {#each topTicks as x}<path d="M{x} 375v4" />{/each}
          {#each vLines as x}<path d="M{x} 670v3" />{/each}
          <path d="M623.500 670v3" />
          {#each hLines as y, i}<path d="M{i % 2 ? 622 : 624} {y}h3M1299 {y}h{i % 2 ? 3 : 1}" />{/each}
        </g>
        <g class="axis" fill="#000">
          <text x="623" y="366">-1.000</text>
          {#each topLabels as t, i}<text class="mid" x={727 + i * 52} y="366">{t}</text>{/each}
          <text class="end" x="1298" y="366">-0.935</text>
          {#each volts as v}
            <text class="end" x="617" y={voltY(v)}>{v}</text>
            <text x="1306" y={voltY(v)}>{v}</text>
          {/each}
          <text x="623" y="693">0.0m</text>
          {#each timeLabels as t, i}<text class="mid" x={719 + i * 96.6} y="693">{t}</text>{/each}
          <text class="end" x="1298" y="693">3.5m</text>
        </g>
        <g class="caption" fill="#000">
          <text x="961" y="721">Time (s)</text>
          <text transform="translate(583 524) rotate(-90)">Channel_A Voltage(V)</text>
          <text transform="translate(1340 524) rotate(90)">Channel_B Voltage(V)</text>
        </g>
        {#if channelB}<polyline points={curve(120.5)} stroke="#0000b8" />{/if}
        {#if channelA}
          <polyline points={curve(6.5)} stroke="#f00" stroke-width="1.200" />
          {#each markers as x}<path d="M{x} {Math.round(sine(x, 6.5)) - 4}l4 7h-8z" stroke="#555" />{/each}
        {/if}
      </svg>
      <div class="legend">
        <i class="selected"></i>
        <input id="cha" type="checkbox" bind:checked={channelA} /><label for="cha">Channel A</label>
        <input id="chb" type="checkbox" bind:checked={channelB} /><label class="blue" for="chb">Channel B</label>
      </div>
    </div>
    <footer><span>Selected Trace:Channel A</span><i></i></footer>
  </section>
</div>

<style>
  :global(body) {
    margin: 0;
    overflow: hidden;
  }

  .app {
    position: relative;
    height: 100vh;
    display: flex;
    flex-direction: column;
    background: #f0f0f0;
    color: #000;
    font: 14px/20px "Open Sans", "Noto Sans", sans-serif;
  }

  button {
    margin: 0;
    padding: 0;
    border: none;
    background: none;
    color: inherit;
    font: inherit;
    white-space: nowrap;
  }

  :global(.icon) {
    flex: none;
    display: block;
  }

  :global(.icon text) {
    font-family: "Liberation Sans", Arial, sans-serif;
  }

  h1,
  h2 {
    margin: 0;
    font-size: 14px;
    font-weight: 400;
  }

  /* title and menu */
  .titlebar {
    height: 28px;
    display: flex;
    align-items: center;
    gap: 6px;
    padding-left: 3px;
    background: #fff;
    border-bottom: 1px solid #a0a0a0;
    color: #999;
  }

  .winbtns {
    margin-left: auto;
    display: flex;
  }

  .winbtns button {
    width: 58px;
    height: 28px;
    display: grid;
    place-items: center;
  }

  .winbtns button:last-child {
    width: 63px;
  }

  .menubar {
    height: 29px;
    display: flex;
    align-items: center;
    padding: 0 4px;
    border-top: 1px solid #fff;
    border-bottom: 1px solid #a0a0a0;
  }

  .menubar > button {
    padding: 0 7px;
    height: 26px;
  }

  .menubar u {
    text-underline-offset: 2px;
  }

  .mdibtns {
    margin-left: auto;
    display: flex;
    align-self: flex-end;
    gap: 1px;
    padding-bottom: 2px;
  }

  .mdibtns button {
    width: 20px;
    height: 20px;
    display: grid;
    place-items: center;
    border: 1px solid #fff;
    border-right: 2px solid #696969;
    border-bottom: 2px solid #696969;
    box-sizing: border-box;
  }

  /* toolbars */
  .toolrow {
    display: flex;
    height: 32px;
  }

  .bar {
    display: flex;
    align-items: center;
    box-sizing: border-box;
    height: 32px;
    border-top: 1px solid #fff;
    border-right: 1px solid #a0a0a0;
    border-bottom: 1px solid #a0a0a0;
    border-left: 1px solid #fff;
  }

  .tool {
    width: 28px;
    height: 26px;
    display: grid;
    place-items: center;
    flex: none;
    box-sizing: border-box;
  }

  .tool.on {
    background: #f8f8f8;
    border: 1px solid #fff;
    border-top-color: #a0a0a0;
    border-left-color: #a0a0a0;
  }

  .sep {
    flex: none;
    width: 8px;
    height: 26px;
    background: linear-gradient(#a0a0a0, #a0a0a0) 4px 0 / 1px 100% no-repeat;
  }

  .caret {
    width: 13px;
    height: 26px;
    display: grid;
    place-items: center;
  }

  .caret::after {
    content: "";
    border: 3px solid transparent;
    border-top: 4px solid #000;
    border-bottom: none;
  }

  .standard {
    padding: 0 2px 0 10px;
  }

  .views {
    padding: 0 2px 0 9px;
  }

  .wide {
    display: flex;
  }

  .wide .tool {
    width: 29px;
  }

  .combo {
    position: relative;
    width: 187px;
    display: flex;
  }

  .combo select {
    appearance: none;
    width: 186px;
    height: 25px;
    padding: 0 0 0 4px;
    border: 1px solid #adadad;
    border-radius: 0;
    background: #e1e1e1;
    color: #000;
    font: inherit;
    font-size: 13px;
  }

  .combo svg {
    position: absolute;
    right: 6px;
    top: 9px;
    pointer-events: none;
  }

  .zoom {
    margin-left: 361px;
    padding: 0 3px 0 10px;
  }

  .components {
    padding: 0 2px 0 10px;
  }

  .simulation {
    width: 268px;
    padding-left: 11px;
  }

  .interactive {
    display: flex;
    align-items: center;
    gap: 3px;
    padding: 0 0 2px 1px;
  }

  .probes {
    padding: 0 2px 0 10px;
  }

  /* document area */
  .middle {
    flex: 1;
    display: flex;
    min-height: 0;
    border-top: 1px solid #696969;
  }

  .documents {
    flex: 1;
    display: flex;
    flex-direction: column;
    min-width: 0;
    border-right: 1px solid #696969;
  }

  .workspace {
    flex: 1;
    display: flex;
    min-height: 0;
    margin: 3px 6px 6px 4px;
    border-top: 3px solid #696969;
    border-left: 3px solid #696969;
    border-bottom: 1px solid #fff;
    background: #ababab;
  }

  .sheet {
    flex: none;
    overflow: hidden;
    background: #fff;
    box-shadow: 2px 0 14px 2px #333;
    clip-path: inset(0 -20px 0 0);
  }

  .sheet svg,
  .chart {
    display: block;
  }

  .sheet text {
    font-family: "Liberation Sans", Arial, sans-serif;
  }

  .ruler text {
    font-size: 12px;
    text-anchor: middle;
  }

  .part text {
    font-size: 16px;
    font-weight: 700;
  }

  .sheet .pin text {
    font: 10px "DejaVu Sans", sans-serif;
  }

  .scrollbar {
    margin-left: auto;
    width: 20px;
    display: flex;
    flex-direction: column;
    background: #f0f0f0;
  }

  .scrollbar button {
    height: 21px;
  }

  .scrollbar svg {
    display: block;
    margin: auto;
    fill: none;
    stroke: #505050;
    stroke-width: 2;
  }

  .track {
    flex: 1;
  }

  .thumb {
    height: 72%;
    background: #cdcdcd;
  }

  .doctabs {
    display: flex;
    align-items: flex-start;
    height: 32px;
    padding-left: 4px;
    background: linear-gradient(#696969, #696969) 99px 0 / 100% 1px no-repeat;
  }

  .doctab {
    display: flex;
    align-items: center;
    gap: 4px;
    height: 26px;
    padding: 0 3px 0 2px;
    border: 1px solid #fff;
    border-right: 2px solid #000;
    border-bottom: 1px solid #000;
    border-radius: 0 0 3px 3px;
  }

  .doctab.current {
    height: 28px;
    border-bottom-width: 2px;
  }

  .cascade {
    margin: 7px 2px 0 auto;
  }

  .instruments {
    width: 31px;
    display: flex;
    flex-direction: column;
    align-items: center;
    align-self: flex-start;
    box-sizing: border-box;
    padding: 12px 2px 2px 0;
    border: 1px solid #a0a0a0;
    border-top-color: #fff;
    border-left: none;
  }

  .instruments button {
    height: 26px;
    display: grid;
    place-items: center;
  }

  .instruments hr {
    width: 27px;
    margin: 3px 0;
    border: none;
    border-top: 1px solid #a0a0a0;
    border-bottom: 1px solid #fff;
  }

  .instruments .more {
    height: 14px;
  }

  .more::after {
    content: "";
    border: 3px solid transparent;
    border-left: 3px solid #000;
    border-right: none;
  }

  .more.off::after {
    border-left-color: #a0a0a0;
  }

  /* spreadsheet */
  .spreadsheet {
    height: 185px;
    display: flex;
    box-sizing: border-box;
    border-top: 1px solid #696969;
    border-bottom: 1px solid #a0a0a0;
  }

  .grip {
    width: 32px;
    display: flex;
    flex-direction: column;
    padding-top: 3px;
    gap: 2px;
  }

  .small {
    width: 16px;
    height: 16px;
    margin-left: 6px;
    display: grid;
    place-items: center;
    box-sizing: border-box;
    border: 1px solid #fff;
    border-right-color: #696969;
    border-bottom-color: #696969;
  }

  .strip {
    width: 25px;
    height: 139px;
    margin: 2px 0 0 2px;
    padding: 4px 0 0 6px;
    box-sizing: border-box;
    background: linear-gradient(#b9c9d8, #d8e4f2);
    display: flex;
    align-items: center;
    writing-mode: vertical-rl;
    transform: rotate(180deg);
    font-size: 14px;
  }

  .results {
    flex: 1;
    display: flex;
    flex-direction: column;
    padding: 7px 9px 5px 0;
  }

  .log {
    flex: 1;
    padding: 4px 27px;
    border: 1px solid #828790;
    background: #fff;
  }

  .restabs {
    display: flex;
    align-items: flex-start;
    gap: 2px;
    margin-top: 4px;
    height: 23px;
    background: linear-gradient(#696969, #696969) 53px 0 / 100% 1px no-repeat;
    font-size: 12px;
  }

  .restabs button {
    height: 21px;
    padding: 0 4px;
    border: 1px solid #fff;
    border-top: 1px solid #696969;
    border-right: 2px solid #696969;
    border-bottom: 2px solid #696969;
    box-sizing: border-box;
    line-height: 18px;
  }

  .restabs button.current {
    height: 23px;
    padding: 2px 5px 0;
    border-top-color: #f0f0f0;
    margin-right: -2px;
  }

  .restabs button:nth-child(2) {
    padding-right: 14px;
  }

  .status {
    height: 22px;
    display: flex;
    justify-content: flex-end;
    border-top: 1px solid #fff;
  }

  .cell {
    box-sizing: border-box;
    border-left: 1px solid #d0d0d0;
    padding-left: 4px;
    line-height: 24px;
  }

  .dash {
    width: 148px;
    border: none;
    padding: 0;
  }

  .blank {
    width: 183px;
  }

  .tran {
    width: 183px;
  }

  .progress {
    width: 65px;
    display: flex;
    gap: 2px;
    padding-top: 5px;
  }

  .progress i {
    width: 6px;
    height: 13px;
    box-sizing: border-box;
    border: 1px solid #a8a8a8;
    border-right-color: #fff;
    border-bottom-color: #fff;
  }

  /* taskbar */
  .taskbar {
    height: 50px;
    display: flex;
    background: #dcdcdc;
    gap: 1px;
  }

  .task {
    width: 61px;
    display: grid;
    place-items: center;
    background-repeat: no-repeat;
  }

  .task.sys {
    width: 60px;
    margin-right: -1px;
  }

  .task:nth-child(4) {
    margin-left: 3px;
  }

  .task.open {
    background-image: linear-gradient(#0078d7, #0078d7);
    background-size: 51px 3px;
    background-position: 50% 100%;
  }

  .task.stacked {
    background-image: linear-gradient(90deg, #0078d7 41px, #66aee7 41px);
  }

  .task.active {
    background-color: #f3f3f3;
    background-size: 100% 3px;
  }

  .tray {
    margin-left: auto;
    display: flex;
    align-items: center;
    gap: 13px;
    padding-right: 9px;
    border-right: 1px solid #aaa;
    margin-right: 5px;
  }

  .weather {
    font-size: 17px;
    margin-right: 4px;
  }

  .tray time {
    width: 74px;
    text-align: center;
    line-height: 23px;
  }

  .notify {
    position: relative;
    width: 36px;
    height: 26px;
    margin-left: 6px;
    text-align: left;
  }

  .notify b {
    position: absolute;
    right: 3px;
    bottom: -6px;
    width: 18px;
    height: 18px;
    border: 1px solid #777;
    border-radius: 50%;
    background: #e3e3e3;
    font-size: 12px;
    line-height: 18px;
    text-align: center;
  }

  /* video call thumbnail */
  .call {
    position: absolute;
    top: 208px;
    right: 212px;
    width: 280px;
    height: 158px;
    display: flex;
    align-items: center;
    justify-content: center;
    background: #222;
    box-shadow: 5px 8px 12px rgba(0, 0, 0, 0.5);
    color: #fff;
    outline: 1px solid #4a4a4a;
  }

  .call strong {
    font-size: 23px;
  }

  .who {
    position: absolute;
    left: 0;
    bottom: 0;
    display: flex;
    align-items: center;
    gap: 6px;
    height: 24px;
    padding: 0 5px;
    background: #1a1a1a;
    font-size: 15px;
  }

  /* grapher window */
  .grapher {
    position: absolute;
    left: 558px;
    top: 223px;
    width: 805px;
    box-sizing: border-box;
    display: flex;
    flex-direction: column;
    background: #f0f0f0;
    box-shadow: 0 0 0 1px #aaa, 2px 6px 18px 2px rgba(0, 0, 0, 0.45);
  }

  .grapher header {
    height: 37px;
    display: flex;
    align-items: center;
    padding-right: 2px;
    background: #fff;
    border-bottom: 1px solid #a0a0a0;
  }

  .grapher h2 {
    flex: 1;
    padding-left: 9px;
  }

  .grapher header button {
    width: 58px;
    height: 36px;
    display: grid;
    place-items: center;
  }

  .grapher nav {
    height: 29px;
    display: flex;
    align-items: center;
    padding-left: 4px;
    border-bottom: 1px solid #a0a0a0;
  }

  .grapher nav button {
    padding: 0 7px 0 6px;
  }

  .gtools {
    display: flex;
    align-items: center;
    height: 28px;
    border-top: 1px solid #fff;
    border-bottom: 1px solid #a0a0a0;
  }

  .gtools .tool {
    width: 29px;
    height: 28px;
  }

  .gtools .sep {
    width: 6px;
    background-position: 2px 0;
  }

  .gtools .tool.on {
    background: #c0dcf3;
    border-color: #90c8f6;
  }

  .gtabs {
    display: flex;
    align-items: flex-end;
    height: 24px;
    padding-left: 4px;
    font-size: 12px;
  }

  .gtabs button {
    width: 115px;
    height: 21px;
    border: 1px solid #fff;
    border-bottom: none;
    box-sizing: border-box;
  }

  .gtabs .current {
    width: 121px;
    height: 23px;
    padding-bottom: 3px;
    border-right: 2px solid #696969;
  }

  .chartbox {
    position: relative;
    margin: 0 2px 0 1px;
    padding-left: 3px;
    height: 427px;
    border: 1px solid #a0a0a0;
    border-top-color: #e3e3e3;
    border-right: 2px solid #808080;
    border-bottom: 2px solid #808080;
    box-sizing: border-box;
    background: #fff;
  }

  .pointer {
    position: absolute;
    left: 0;
    top: 202px;
  }

  .axis text {
    font: 16px "Liberation Sans", Arial, sans-serif;
  }

  .axis .mid {
    text-anchor: middle;
  }

  .axis .end {
    text-anchor: end;
  }

  .caption text {
    font: 20px "Liberation Sans", Arial, sans-serif;
    text-anchor: middle;
  }

  .legend {
    display: flex;
    align-items: flex-start;
    padding-left: 6px;
    font: 13px/15px "Liberation Sans", Arial, sans-serif;
  }

  .selected {
    border: 8px solid transparent;
    border-left: 5px solid #f00;
    border-right: none;
    margin-top: 9px;
  }

  .legend input {
    appearance: none;
    box-sizing: border-box;
    width: 14px;
    height: 14px;
    margin: 10px 3px 0 0;
    border: 1px solid #000;
    border-radius: 0;
    background: #fff;
    position: relative;
  }

  .legend input:checked::after {
    content: "";
    position: absolute;
    left: 4px;
    top: 0;
    width: 3px;
    height: 8px;
    border: solid #000;
    border-width: 0 2px 2px 0;
    transform: rotate(40deg);
  }

  .legend label {
    width: 78px;
    padding-bottom: 3px;
    background: linear-gradient(#f00, #f00) 0 100% / 51px 1px no-repeat;
  }

  .legend .blue {
    background-image: linear-gradient(#0000b8, #0000b8);
  }

  .grapher footer {
    height: 25px;
    margin-top: 3px;
    display: flex;
    align-items: center;
    justify-content: space-between;
    padding-left: 2px;
    border-top: 1px solid #d8d8d8;
  }

  .grapher footer i {
    align-self: flex-end;
    width: 12px;
    height: 12px;
    margin: 3px;
    background: radial-gradient(#b0b0b0 60%, transparent 60%) 0 0 / 4px 4px;
    clip-path: polygon(100% 0, 100% 100%, 0 100%);
  }
</style>
